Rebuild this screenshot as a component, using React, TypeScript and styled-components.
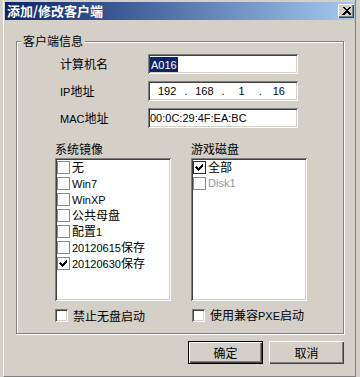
import React from 'react'
import styled, { createGlobalStyle } from 'styled-components'

const FACE = '#d4d0c8'
const CJK = '"Noto Sans CJK SC", "Noto Sans CJK JP", sans-serif'
const LATIN = '"Liberation Sans", Arial, sans-serif'

const sunken = `box-shadow: inset 1px 1px 0 #808080, inset -1px -1px 0 #fff, inset 2px 2px 0 #404040, inset -2px -2px 0 ${FACE};`

const GlobalStyle = createGlobalStyle`
  html, body {
    margin: 0;
    padding: 0;
  }
  body {
    width: 360px;
    height: 377px;
    overflow: hidden;
    background: ${FACE};
    font-family: ${CJK};
    font-size: 12px;
    color: #000;
  }
`

const Window = styled.div`
  box-sizing: border-box;
  width: 353px;
  height: 377px;
  margin-left: 3px;
  padding: 2px 0 0 1px;
  border-left: 1px solid #fff;
  border-right: 1px solid #808080;
  border-bottom: 1px solid #808080;
  display: flex;
  flex-direction: column;
`

const TitleBar = styled.div`
  height: 18px;
  display: flex;
  align-items: center;
  justify-content: space-between;
  padding: 0 1px 0 2px;
  background: linear-gradient(to right, #0a246a, #a6caf0);
`

const TitleText = styled.div`
  color: #fff;
  font-weight: bold;
  font-size: 13px;
  line-height: 18px;
`

const CloseButton = styled.div`
  width: 16px;
  height: 14px;
  box-sizing: border-box;
  background: ${FACE};
  display: flex;
  align-items: center;
  justify-content: center;
  box-shadow: inset 1px 1px 0 #fff, inset -1px -1px 0 #404040, inset -2px -2px 0 #808080;
`

const Group = styled.fieldset`
  margin: 14px 11px 0;
  padding: 0 0 10px;
  min-width: 0;
  border: 1px solid #808080;
  box-shadow: inset 1px 1px 0 #fff, 1px 1px 0 #fff;
`

const Legend = styled.legend`
  margin-left: 4px;
  padding: 0 2px;
  line-height: 14px;
  background: ${FACE};
`

const InfoGrid = styled.div`
  display: grid;
  grid-template-columns: 88px 150px;
  grid-auto-rows: 20px;
  row-gap: 7px;
  align-items: center;
  margin: 6px 0 0 43px;
`

const Label = styled.div`
  line-height: 14px;
`

const Field = styled.div`
  box-sizing: border-box;
  height: 20px;
  padding: 0 2px;
  display: flex;
  align-items: center;
  background: #fff;
  line-height: 14px;
  ${sunken}
`

const IpField = styled(Field)`
  display: grid;
  grid-template-columns: 1fr 3px 1fr 3px 1fr 3px 1fr;
  justify-items: center;
`

const Selected = styled.span`
  background: #0a246a;
  color: #fff;
  line-height: 13px;
  padding: 0 1px;
`

const Lat = styled.span`
  font-family: ${LATIN};
  font-size: 11px;
`

const ListsRow = styled.div`
  display: grid;
  grid-template-columns: 116px 116px;
  column-gap: 20px;
  margin: 14px 0 0 38px;
`

const Column = styled.div`
  display: flex;
  flex-direction: column;
`

const ListLabel = styled.div`
  line-height: 14px;
  margin-bottom: 2px;
`

const ListBox = styled.div`
  box-sizing: border-box;
  height: 143px;
  padding: 1px 2px;
  background: #fff;
  ${sunken}
`

const ListItem = styled.div<{ $disabled?: boolean }>`
  height: 16px;
  display: flex;
  align-items: center;
  gap: 2px;
  line-height: 14px;
  white-space: nowrap;
  color: ${(p) => (p.$disabled ? '#8d96b2' : '#000')};
`

const FlatCheck = styled.span<{ $dark?: boolean }>`
  box-sizing: border-box;
  width: 13px;
  height: 13px;
  flex: none;
  display: flex;
  background: #fff;
  border: 1px solid ${(p) => (p.$dark ? '#2a2a2a' : '#8a8a8a')};
`

const CheckRow = styled.div`
  display: grid;
  grid-template-columns: 116px 116px;
  column-gap: 20px;
  margin: 7px 0 0 38px;
`

const Option = styled.div<{ $shift?: number }>`
  display: flex;
  align-items: center;
  gap: 5px;
  padding-left: ${(p) => p.$shift ?? 0}px;
  line-height: 14px;
  white-space: nowrap;
`

const SunkenCheck = styled.span`
  width: 13px;
  height: 13px;
  flex: none;
  background: #fff;
  ${sunken}
`

const ButtonRow = styled.div`
  display: flex;
  justify-content: flex-end;
  gap: 6px;
  margin: 7px 11px 0 0;
`

const Button = styled.button<{ $default?: boolean }>`
  box-sizing: border-box;
  width: 75px;
  height: 23px;
  padding: 0;
  font-family: ${CJK};
  font-size: 12px;
  color: #000;
  background: ${FACE};
  border: ${(p) => (p.$default ? '1px solid #000' : 'none')};
  box-shadow: ${(p) =>
    p.$default
      ? 'inset 1px 1px 0 #fff, inset -1px -1px 0 #404040, inset -2px -2px 0 #808080'
      : 'inset 1px 1px 0 #fff, inset -1px -1px 0 #404040, inset -2px -2px 0 #808080'};
`

function Mixed({ text }: { text: string }) {
  const runs: { s: string; cjk: boolean }[] = []
  for (const ch of text) {
    const cjk = /[\u3000-\u9fff\uff00-\uffef]/.test(ch)
    const last = runs[runs.length - 1]
    if (last && last.cjk === cjk) last.s += ch
    else runs.push({ s: ch, cjk })
  }
  return (
    <>
      {runs.map((r, i) => (r.cjk ? <span key={i}>{r.s}</span> : <Lat key={i}>{r.s}</Lat>))}
    </>
  )
}

function CheckMark() {
  return (
    <svg width="11" height="11" viewBox="0 0 11 11" shapeRendering="crispEdges">
      <path d="M2 4h1v1h1v1h1v-1h1v-1h1v-1h1v-1h1v3h-1v1h-1v1h-1v1h-1v1h-1v-1h-1v-1h-1v-1h-1z" fill="#000" />
    </svg>
  )
}

function CloseGlyph() {
  return (
    <svg width="9" height="8" viewBox="0 0 9 8" shapeRendering="crispEdges">
      <path d="M0 0h2l2.5 2.5L7 0h2L5.5 3.5 9 7v1H7L4.5 5.5 2 8H0V7l3.5-3.5z" fill="#000" />
    </svg>
  )
}

const images = [
  { name: '无', checked: false },
  { name: 'Win7', checked: false },
  { name: 'WinXP', checked: false },
  { name: '公共母盘', checked: false },
  { name: '配置1', checked: false },
  { name: '20120615保存', checked: false },
  { name: '20120630保存', checked: true },
]

const ipParts = ['192', '168', '1', '16']

export default function App() {
  return (
    <>
      <GlobalStyle />
      <Window>
        <TitleBar>
          <TitleText>添加/修改客户端</TitleText>
          <CloseButton>
            <CloseGlyph />
          </CloseButton>
        </TitleBar>

        <Group>
          <Legend>客户端信息</Legend>
          <InfoGrid>
            <Label>计算机名</Label>
            <Field>
              <Selected>
                <Lat>A016</Lat>
              </Selected>
            </Field>
            <Label>
              <Mixed text="IP地址" />
            </Label>
            <IpField>
              {ipParts.map((p, i) => (
                <React.Fragment key={i}>
                  {i > 0 && <Lat>.</Lat>}
                  <Lat>{p}</Lat>
                </React.Fragment>
              ))}
            </IpField>
            <Label>
              <Mixed text="MAC地址" />
            </Label>
            <Field>
              <Lat>00:0C:29:4F:EA:BC</Lat>
            </Field>
          </InfoGrid>

          <ListsRow>
            <Column>
              <ListLabel>系统镜像</ListLabel>
              <ListBox>
                {images.map((img) => (
                  <ListItem key={img.name}>
                    <FlatCheck>{img.checked && <CheckMark />}</FlatCheck>
                    <span>
                      <Mixed text={img.name} />
                    </span>
                  </ListItem>
                ))}
              </ListBox>
            </Column>
            <Column>
              <ListLabel>游戏磁盘</ListLabel>
              <ListBox>
                <ListItem>
                  <FlatCheck $dark>
                    <CheckMark />
                  </FlatCheck>
                  <span>全部</span>
                </ListItem>
                <ListItem $disabled>
                  <FlatCheck />
                  <Lat>Disk1</Lat>
                </ListItem>
              </ListBox>
            </Column>
          </ListsRow>

          <CheckRow>
            <Option>
              <SunkenCheck />
              <span>禁止无盘启动</span>
            </Option>
            <Option $shift={1}>
              <SunkenCheck />
              <span>
                <Mixed text="使用兼容PXE启动" />
              </span>
            </Option>
          </CheckRow>
        </Group>

        <ButtonRow>
          <Button $default>确定</Button>
          <Button>取消</Button>
        </ButtonRow>
      </Window>
    </>
  )
}
